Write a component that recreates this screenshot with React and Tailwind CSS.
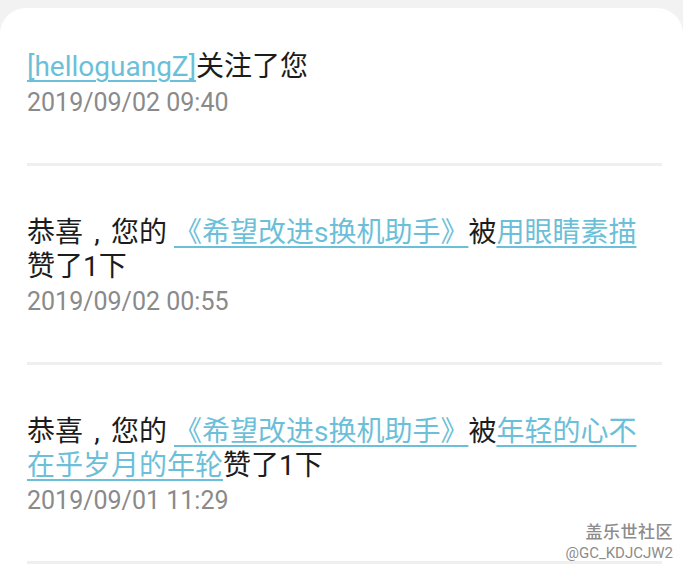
import React from 'react';

const FONT = { fontFamily: 'Roboto, "Noto Sans CJK SC", sans-serif' };

function Link({ children }) {
  return (
    <span className="text-[#6cbfd9] underline decoration-[#6cbfd9] decoration-[1.5px] underline-offset-[4px]">
      {children}
    </span>
  );
}

// the comma in the reference sits centred in its own cell
function Comma() {
  return <span className="inline-block w-[28px] text-center">,</span>;
}

function Divider() {
  return <div className="ml-[27px] mr-[21px] h-[3px] bg-[#efefef]" />;
}

function Item({ children, time, first }) {
  return (
    <div className={`pl-[27px] pr-[21px] ${first ? 'pt-[42px]' : 'pt-[50px]'} pb-[43px]`}>
      <p className="text-[28px] leading-[34px] text-[#1c1c1c]">{children}</p>
      <p className={`${first ? 'mt-[2px]' : 'mt-[1px]'} text-[25px] leading-[34px] text-[#8a8a8a]`}>{time}</p>
    </div>
  );
}

export default function App() {
  return (
    <div className="relative w-[683px] h-[581px] overflow-hidden bg-[#f2f2f2] pt-[8px]" style={FONT}>
      <div className="h-full bg-white rounded-t-[26px]">
        <Item first time="2019/09/02 09:40">
          <Link>[helloguangZ]</Link>关注了您
        </Item>
        <Divider />
        <Item time="2019/09/02 00:55">
          恭喜<Comma />您的 <Link>《希望改进s换机助手》</Link>被<Link>用眼睛素描</Link>赞了1下
        </Item>
        <Divider />
        <Item time="2019/09/01 11:29">
          恭喜<Comma />您的 <Link>《希望改进s换机助手》</Link>被<Link>年轻的心不在乎岁月的年轮</Link>赞了1下
        </Item>
        <Divider />
      </div>

      <div className="absolute right-[10px] top-[521px] flex flex-col items-end text-[#8c8c8c]">
        <span className="text-[17px] leading-[22px] font-medium tracking-[0.5px]">盖乐世社区</span>
        <span className="text-[15px] leading-[20px]">@GC_KDJCJW2</span>
      </div>
    </div>
  );
}
